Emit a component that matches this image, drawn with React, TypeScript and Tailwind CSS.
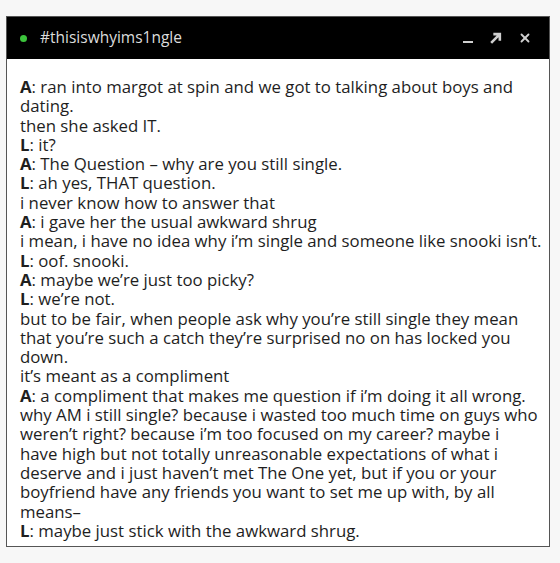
import { X } from "lucide-react";

type Line = { who?: "A" | "L"; text: string; rest?: string };

const lines: Line[] = [
  { who: "A", text: "ran into margot at spin and we got to talking about boys and dating." },
  { text: "then she asked IT." },
  { who: "L", text: "it?" },
  { who: "A", text: "The Question – why are you still single." },
  { who: "L", text: "ah yes, THAT question." },
  { text: "i never know how to answer that" },
  { who: "A", text: "i gave her the usual awkward shrug" },
  { text: "i mean, i have no idea why i’m single and someone like snooki isn’t." },
  { who: "L", text: "oof. snooki." },
  { who: "A", text: "maybe we’re just too picky?" },
  { who: "L", text: "we’re not." },
  { text: "but to be fair, when people ask why you’re still single they mean that you’re such a catch they’re surprised no on has locked you down." },
  { text: "it’s meant as a compliment" },
  { who: "A", text: "a compliment that makes me question if i’m doing it all wrong." },
  {
    text: "why AM i still single? because i wasted too much time on guys who weren’t right? because i’m too focused on my career? maybe i",
    rest: "have high but not totally unreasonable expectations of what i deserve and i just haven’t met The One yet, but if you or your boyfriend have any friends you want to set me up with, by all means–",
  },
  { who: "L", text: "maybe just stick with the awkward shrug." },
];

export default function App() {
  return (
    <div className="min-h-[563px] bg-[#f7f7f7] px-[6px] pt-[16px] font-['Open_Sans',_'Liberation_Sans',_sans-serif]">
      <div className="w-[544px] border-[1.5px] border-[#555] bg-white">
        <div className="flex h-[42px] items-center bg-black pl-[13px] pr-[17px]">
          <span className="h-[7px] w-[7px] rounded-full bg-[#3cc43c]" />
          <span className="ml-[13px] text-[15.5px] text-[#dcdcdc]">#thisiswhyims1ngle</span>
          <div className="ml-auto flex items-center gap-[16px] text-[#cfcfcf]">
            <span className="mt-[8px] h-[2.5px] w-[10px] bg-[#cfcfcf]" />
            <svg width="13" height="13" viewBox="0 0 12 12" fill="none" stroke="#cfcfcf" strokeWidth="2.4">
              <path d="M2 10L10 2M4 2h6v6" />
            </svg>
            <X size={14} strokeWidth={3.2} />
          </div>
        </div>
        <div className="w-[540px] pb-[6px] pl-[13px] pt-[18px] text-[16.8px] leading-[19.3px] text-[#1e1e1e]">
          {lines.map((l, i) => (
            <p key={i}>
              {l.who && <b className="font-bold">{l.who}</b>}
              {l.who ? ": " : ""}
              {l.text}
              {l.rest && (
                <>
                  <br />
                  {l.rest}
                </>
              )}
            </p>
          ))}
        </div>
      </div>
    </div>
  );
}
